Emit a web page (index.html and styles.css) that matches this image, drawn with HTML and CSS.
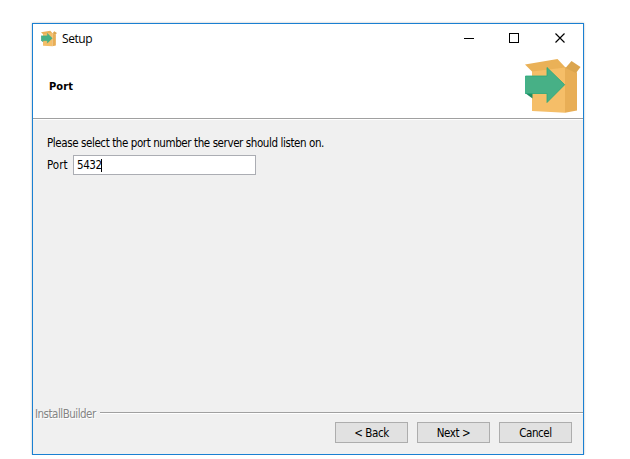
FILE: index.html
```html
<!DOCTYPE html>
<html lang="en">
<head>
<meta charset="utf-8">
<title>Setup</title>
<link rel="stylesheet" href="styles.css">
</head>
<body>
<svg width="0" height="0" class="defs" aria-hidden="true">
  <symbol id="box" viewBox="0 0 56 56">
    <path d="M7 12 40 9V54.700L7 53Z" fill="#f5be68"/>
    <path d="M40 9 52 14.500V52.500L40 54.700Z" fill="#e8ae56"/>
    <path d="M0 6.500 32.500 1 40.500 9.500 7 13.500Z" fill="#eab157"/>
    <path d="M40.500 10 46.500 3 55.500 9 51 15Z" fill="#dba54e"/>
    <path d="M0 35H7.500V40.500Z" fill="#1f8a60"/>
    <path d="M.5 18H22V9.500L39.700 26.700 22 44.500V35.500H.5Z" fill="#47b086" stroke="#27a87c" stroke-width=".8"/>
  </symbol>
</svg>
<main class="window">
  <header class="header">
    <div class="titlebar">
      <svg class="app-icon"><use href="#box"/></svg>
      <span class="title">Setup</span>
      <svg class="controls" width="102" height="12" viewBox="0 0 102 12" fill="none" stroke="#000" shape-rendering="crispEdges">
        <path d="M0 6.500H10M45.500 1.500H54.500V10.500H45.500Z"/>
        <path d="M91.500 1.500 100.500 10.500M100.500 1.500 91.500 10.500" stroke-width="1.150" shape-rendering="auto"/>
      </svg>
    </div>
    <div class="banner">
      <h1>Port</h1>
      <svg class="logo"><use href="#box"/></svg>
    </div>
  </header>
  <section class="content">
    <p><span class="prompt">Please select the port number the server should listen on.</span></p>
    <div class="field"><span class="label">Port</span><div class="input"><span class="value">5432</span><i class="caret"></i></div></div>
  </section>
  <footer class="footer">
    <div class="brand"><span>InstallBuilder</span><i class="rule"></i></div>
    <div class="buttons">
      <button>&lt; Back</button>
      <button>Next &gt;</button>
      <button>Cancel</button>
    </div>
  </footer>
</main>
</body>
</html>
```
FILE: styles.css
```css
* { box-sizing: border-box; }
body {
  margin: 0;
  padding: 23px 0 0 32px;
  background: #fff;
  color: #000;
  font: 11.5px/14px "DejaVu Sans Condensed", "DejaVu Sans", sans-serif;
  font-stretch: condensed;
  letter-spacing: -0.41px;
}
.defs { position: absolute; }
.window {
  display: flex;
  flex-direction: column;
  width: 552px;
  height: 432px;
  border: 1px solid #1a80d2;
  background: #f0f0f0;
  box-shadow: 0 0 2px rgba(0, 0, 0, .28);
}
.header {
  height: 96px;
  background: #fff;
  border-bottom: 1px solid #fff;
  box-shadow: inset 0 -1px #a0a0a0;
}
.titlebar {
  display: flex;
  align-items: center;
  height: 30px;
  padding-left: 8px;
}
.app-icon { width: 16px; height: 17px; margin-top: -2px; }
.title { margin-left: 5px; font: 12px/14px "Open Sans", "Noto Sans", sans-serif; letter-spacing: -0.45px; }
.controls { margin-left: auto; margin-right: 17px; margin-top: -2px; }
.banner { display: flex; justify-content: space-between; padding: 4px 2px 0 16px; }
h1 { margin: 22px 0 0; font-size: 11px; line-height: 14px; letter-spacing: 0.1px; }
.logo { width: 56px; height: 56px; }
.content { padding: 16px 14px; }
p { height: 19px; margin: 0; line-height: 15px; }
.field { display: flex; align-items: center; }
.label { width: 26px; letter-spacing: 0; }
.input {
  display: flex;
  align-items: center;
  width: 183px;
  height: 20px;
  padding-left: 3px;
  border: 1px solid #abadb3;
  background: #fff;
}
.value { width: 24px; white-space: nowrap; }
.caret { width: 1px; height: 13px; background: #000; }
.footer { margin-top: auto; height: 48px; }
.brand { display: flex; height: 14px; padding-left: 2px; color: #858585; text-shadow: 1px 1px #fff; }
.brand span { width: 65px; padding-top: 1px; letter-spacing: -0.5px; }
.rule { flex: 1; height: 2px; margin-top: 6px; background: #a0a0a0; border-bottom: 1px solid #fff; }
.buttons { display: flex; justify-content: flex-end; gap: 9px; padding: 2px 11px 0 0; }
button {
  width: 73px;
  height: 21px;
  padding: 1px 0 0;
  border: 1px solid #adadad;
  background: #e1e1e1;
  color: #000;
  font: inherit;
  letter-spacing: inherit;
}
```
